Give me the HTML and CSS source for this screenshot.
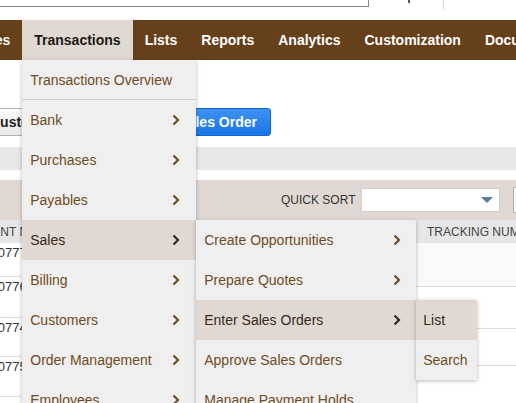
FILE: index.html
```html
<!DOCTYPE html>
<html>
<head>
<meta charset="utf-8">
<link rel="stylesheet" href="styles.css">
</head>
<body>
<div class="page">
  <header class="topbar">
    <div class="search-box"></div>
    <span class="help-mark"></span>
    <span class="top-divider"></span>
  </header>
  <nav class="nav">
    <ul class="nav-list">
      <li class="nav-item">Activities</li>
      <li class="nav-item active">Transactions
        <ul class="menu menu-main">
          <li class="menu-item overview">Transactions Overview</li>
          <li class="menu-item">Bank<svg class="chev" viewBox="0 0 8 12"><path d="M1.5 1.5 L6 6 L1.5 10.5"/></svg></li>
          <li class="menu-item">Purchases<svg class="chev" viewBox="0 0 8 12"><path d="M1.5 1.5 L6 6 L1.5 10.5"/></svg></li>
          <li class="menu-item">Payables<svg class="chev" viewBox="0 0 8 12"><path d="M1.5 1.5 L6 6 L1.5 10.5"/></svg></li>
          <li class="menu-item hl">Sales<svg class="chev" viewBox="0 0 8 12"><path d="M1.5 1.5 L6 6 L1.5 10.5"/></svg>
            <ul class="menu menu-sub">
              <li class="menu-item">Create Opportunities<svg class="chev" viewBox="0 0 8 12"><path d="M1.5 1.5 L6 6 L1.5 10.5"/></svg></li>
              <li class="menu-item">Prepare Quotes<svg class="chev" viewBox="0 0 8 12"><path d="M1.5 1.5 L6 6 L1.5 10.5"/></svg></li>
              <li class="menu-item hl">Enter Sales Orders<svg class="chev" viewBox="0 0 8 12"><path d="M1.5 1.5 L6 6 L1.5 10.5"/></svg>
                <ul class="menu menu-leaf">
                  <li class="menu-item hl">List</li>
                  <li class="menu-item">Search</li>
                </ul>
              </li>
              <li class="menu-item">Approve Sales Orders</li>
              <li class="menu-item">Manage Payment Holds</li>
            </ul>
          </li>
          <li class="menu-item">Billing<svg class="chev" viewBox="0 0 8 12"><path d="M1.5 1.5 L6 6 L1.5 10.5"/></svg></li>
          <li class="menu-item">Customers<svg class="chev" viewBox="0 0 8 12"><path d="M1.5 1.5 L6 6 L1.5 10.5"/></svg></li>
          <li class="menu-item">Order Management<svg class="chev" viewBox="0 0 8 12"><path d="M1.5 1.5 L6 6 L1.5 10.5"/></svg></li>
          <li class="menu-item">Employees<svg class="chev" viewBox="0 0 8 12"><path d="M1.5 1.5 L6 6 L1.5 10.5"/></svg></li>
        </ul>
      </li>
      <li class="nav-item">Lists</li>
      <li class="nav-item">Reports</li>
      <li class="nav-item">Analytics</li>
      <li class="nav-item">Customization</li>
      <li class="nav-item">Documents</li>
    </ul>
  </nav>
  <main class="content">
    <div class="toolbar">
      <span class="btn btn-secondary">Customer</span>
      <span class="btn btn-primary">Sales Order</span>
    </div>
    <div class="filter-bar"></div>
    <div class="sort-bar">
      <span class="sort-label">QUICK SORT</span>
      <span class="sort-select"><svg class="sort-arrow" viewBox="0 0 12 6"><path d="M0 0 H12 L6 6 Z"/></svg></span>
      <span class="sort-extra"></span>
    </div>
    <div class="table-head">
      <span class="th th-doc">DOCUMENT NUMBER</span>
      <span class="th th-track">TRACKING NUMBERS</span>
    </div>
    <div class="table-body">
      <ul class="col col-doc">
        <li class="cell r1">SO0777</li>
        <li class="cell r2">SO0776</li>
        <li class="cell r3">SO0774</li>
        <li class="cell r4">SO0775</li>
      </ul>
      <ul class="col col-track">
        <li class="cell t1"></li>
        <li class="cell t2"></li>
        <li class="cell t3"></li>
        <li class="cell t4"></li>
      </ul>
    </div>
  </main>
</div>
</body>
</html>
```
FILE: styles.css
```css
* { box-sizing: border-box; margin: 0; padding: 0; }
html, body { width: 516px; height: 403px; overflow: hidden; background: #fff; }
body { font-family: "Liberation Sans", Arial, Helvetica, sans-serif; color: #333; }
ul { list-style: none; }
.page { position: relative; width: 516px; height: 403px; overflow: hidden; }

/* top strip */
.topbar { height: 20px; display: flex; align-items: flex-start; }
.search-box { width: 369px; height: 7px; border-right: 1px solid #858585; border-bottom: 1px solid #858585; flex-shrink: 0; }
.help-mark { width: 2px; height: 3px; background: #555; margin-left: 39px; }
.top-divider { width: 1px; height: 10px; background: #dcdcdc; margin-left: 33px; }

/* main navigation */
.nav { height: 40px; background: #66401a; position: relative; z-index: 5; }
.nav-list { display: flex; height: 100%; margin-left: -64px; }
.nav-item { position: relative; padding: 0 12px; display: flex; align-items: center; color: #fff; font-weight: bold; font-size: 14px; white-space: nowrap; }
.nav-item.active { background: #e0d9d3; color: #1e1a16; }

/* dropdown menus */
.menu { position: absolute; background: #efefef; box-shadow: 0 1px 4px rgba(0, 0, 0, 0.28); font-weight: normal; font-size: 14px; z-index: 10; }
.menu-main { top: 100%; left: 0; width: 174px; }
.menu-item { position: relative; height: 40px; display: flex; align-items: center; justify-content: space-between; padding: 0 16px 0 8px; color: #6f4b24; white-space: nowrap; }
.menu-item.overview { border-bottom: 1px solid #d2d2d2; }
.menu-item.hl { background: #e0d9d3; color: #3a2817; }
.chev { width: 8px; height: 12px; flex-shrink: 0; fill: none; stroke: currentColor; stroke-width: 2.2; }
.menu-sub { left: 100%; top: 0; width: 220px; }
.menu-sub .menu-item { padding-right: 15px; }
.menu-leaf { left: 100%; top: 0; width: 61px; }
.menu-leaf .menu-item { padding-left: 7px; }

/* page content under the menu */
.toolbar { display: flex; margin-top: 48px; height: 28px; }
.btn { height: 28px; padding: 0 12px; font-weight: bold; font-size: 14px; border-radius: 3px; display: flex; align-items: center; white-space: nowrap; }
.btn-secondary { margin-left: -23px; background: linear-gradient(#fbfbfb, #e8e8e8); border: 1px solid #b3b3b3; color: #222; }
.btn-primary { margin-left: 96px; padding: 0 13px; background: linear-gradient(#3d92f2, #1a75e8); border: 1px solid #1464cc; color: #fff; }

.filter-bar { margin-top: 11px; height: 23px; background: #e8e8e8; }

.sort-bar { margin-top: 10px; height: 40px; background: #e0d9d3; display: flex; align-items: center; gap: 6px; padding-left: 281px; }
.sort-label { font-size: 12px; color: #333; white-space: nowrap; }
.sort-select { width: 139px; height: 24px; flex-shrink: 0; background: #fff; border: 1px solid #cfcfcf; display: flex; align-items: center; justify-content: flex-end; padding-right: 6px; }
.sort-arrow { width: 12px; height: 6px; fill: #5b7a9d; }
.sort-extra { width: 30px; height: 26px; flex-shrink: 0; margin-left: 7px; border: 1px solid #b0b0b0; background: #f7f7f7; }

.table-head { height: 23px; background: #e6e6e6; display: flex; align-items: center; font-size: 12px; color: #444; white-space: nowrap; }
.th-doc { margin-left: -53px; width: 480px; flex-shrink: 0; }

.table-body { display: flex; justify-content: space-between; }
.col { display: flex; flex-direction: column; }
.col-doc { width: 60px; margin-left: -21px; }
.col-track { width: 100px; }
.cell { border-bottom: 1px solid #dcdcdc; font-size: 13px; color: #333; padding-top: 2px; }
.r1 { height: 34px; }
.r2 { height: 41px; }
.r3 { height: 39px; }
.r4 { height: 40px; }
.t1 { height: 44px; background: #fafafa; }
.t2 { height: 42px; }
.t3 { height: 37px; }
.t4 { height: 40px; }
```
